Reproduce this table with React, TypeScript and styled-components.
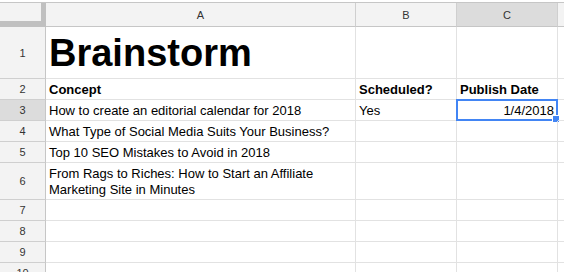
import styled, { createGlobalStyle, css } from 'styled-components';

const GlobalStyle = createGlobalStyle`
    html, body {
        margin: 0;
        padding: 0;
        background: #fff;
        overflow: hidden;
    }
`;

const Sheet = styled.div`
    display: grid;
    grid-template-columns: 46px 310px 101px 101px 1fr;
    grid-auto-rows: auto;
    margin-top: 2px;
    border-top: 1px solid #c6c6c6;
    width: 564px;
    font-family: 'Liberation Sans', Arial, sans-serif;
    color: #000;
`;

const Corner = styled.div`
    box-sizing: border-box;
    height: 24px;
    background: #f3f3f3;
    border-right: 5px solid #c0c0c0;
    border-bottom: 6px solid #c0c0c0;
`;

const ColHeader = styled.div<{ $active?: boolean }>`
    box-sizing: border-box;
    height: 24px;
    display: flex;
    align-items: center;
    justify-content: center;
    background: ${p => (p.$active ? '#dcdcdc' : '#f3f3f3')};
    border-right: 1px solid #cfcfcf;
    border-bottom: 1px solid #c6c6c6;
    font-size: 11px;
    color: #333;
`;

const RowHeader = styled.div<{ $active?: boolean; $h?: number }>`
    box-sizing: border-box;
    height: ${p => p.$h ?? 21}px;
    display: flex;
    align-items: center;
    justify-content: center;
    background: ${p => (p.$active ? '#dcdcdc' : '#f3f3f3')};
    border-right: 1px solid #c6c6c6;
    border-bottom: 1px solid #cfcfcf;
    font-size: 11px;
    color: #333;
`;

const Cell = styled.div<{ $h?: number; $bold?: boolean; $right?: boolean; $title?: boolean }>`
    position: relative;
    box-sizing: border-box;
    height: ${p => p.$h ?? 21}px;
    display: flex;
    align-items: flex-end;
    justify-content: ${p => (p.$right ? 'flex-end' : 'flex-start')};
    padding: 0 3px 1px 3px;
    border-right: 1px solid #e2e2e2;
    border-bottom: 1px solid #e2e2e2;
    font-size: 13px;
    line-height: 16px;
    font-weight: ${p => (p.$bold ? 700 : 400)};
    white-space: normal;
    ${p =>
        p.$title &&
        css`
            font-size: 38px;
            line-height: 44px;
            padding-bottom: 3px;
            white-space: nowrap;
        `}
`;

const Selection = styled.div`
    position: absolute;
    left: -1px;
    top: -1px;
    right: -1px;
    bottom: -1px;
    border: 2px solid #4285f4;
    pointer-events: none;
`;

const Handle = styled.div`
    position: absolute;
    right: -4px;
    bottom: -4px;
    width: 6px;
    height: 6px;
    background: #4285f4;
    border: 1px solid #fff;
`;

type Row = {
    n: number;
    h?: number;
    a?: string;
    b?: string;
    c?: string;
    bold?: boolean;
    title?: boolean;
};

const rows: Row[] = [
    { n: 1, h: 52, a: 'Brainstorm', title: true, bold: true },
    { n: 2, a: 'Concept', b: 'Scheduled?', c: 'Publish Date', bold: true },
    { n: 3, a: 'How to create an editorial calendar for 2018', b: 'Yes', c: '1/4/2018' },
    { n: 4, a: 'What Type of Social Media Suits Your Business?' },
    { n: 5, a: 'Top 10 SEO Mistakes to Avoid in 2018' },
    { n: 6, h: 37, a: 'From Rags to Riches: How to Start an Affiliate Marketing Site in Minutes' },
    { n: 7 },
    { n: 8 },
    { n: 9 },
    { n: 10 },
];

const selected = { row: 3, col: 'C' };

export default function App() {
    return (
        <>
            <GlobalStyle />
            <Sheet>
                <Corner />
                {['A', 'B', 'C', 'D'].map(col => (
                    <ColHeader key={col} $active={col === selected.col}>
                        {col !== 'D' ? col : ''}
                    </ColHeader>
                ))}
                {rows.map(r => {
                    const isSel = r.n === selected.row;
                    return [
                        <RowHeader key={`h${r.n}`} $h={r.h} $active={isSel}>
                            {r.n}
                        </RowHeader>,
                        <Cell key={`a${r.n}`} $h={r.h} $bold={r.bold} $title={r.title}>
                            {r.a}
                        </Cell>,
                        <Cell key={`b${r.n}`} $h={r.h} $bold={r.bold}>
                            {r.b}
                        </Cell>,
                        <Cell key={`c${r.n}`} $h={r.h} $bold={r.bold} $right={!r.bold && !!r.c}>
                            {r.c}
                            {isSel && (
                                <Selection>
                                    <Handle />
                                </Selection>
                            )}
                        </Cell>,
                        <Cell key={`d${r.n}`} $h={r.h} />,
                    ];
                })}
            </Sheet>
        </>
    );
}
